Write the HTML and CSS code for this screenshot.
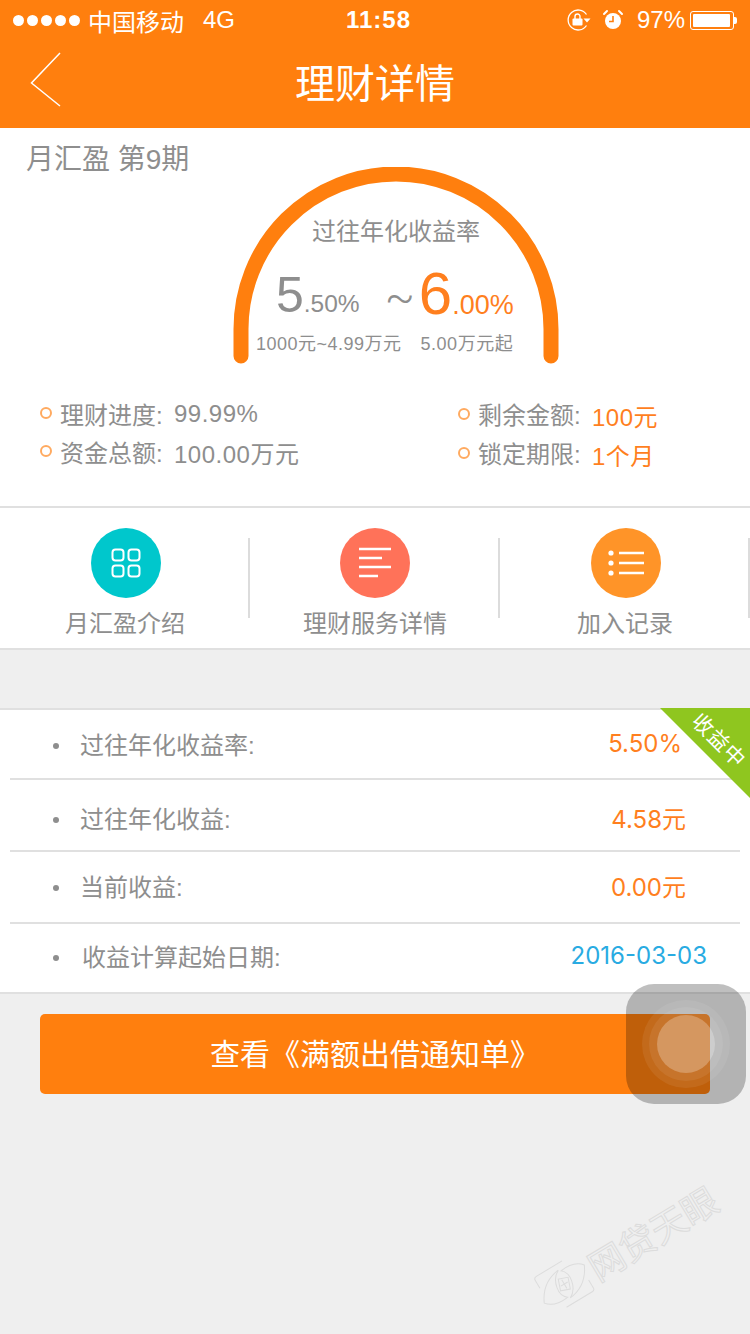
FILE: index.html
```html
<!DOCTYPE html>
<html lang="zh-CN">
<head>
  <meta charset="UTF-8">
  <title>理财详情</title>
  <link rel="stylesheet" href="styles.css">
</head>
<body>
  <div class="page">
    <header class="top">
      <div class="status-bar">
        <div class="status-left">
          <span class="signal"><i></i><i></i><i></i><i></i><i></i></span>
          <span class="carrier">中国移动</span>
          <span class="network">4G</span>
        </div>
        <div class="status-time">11:58</div>
        <div class="status-right">
          <svg class="icon-lock" width="24" height="22" viewBox="0 0 24 22">
            <path d="M19.500 16.500 A10 10 0 1 1 19.500 5.500" fill="none" stroke="#fff" stroke-width="1.300"/>
            <path d="M16.500 9.500 H23.500 L20 13.500 Z" fill="#fff"/>
            <rect x="5.500" y="9.500" width="10" height="7" rx="1" fill="#fff"/>
            <path d="M8 10 V7.500 A2.500 2.500 0 0 1 13 7.500 V10" fill="none" stroke="#fff" stroke-width="1.400"/>
          </svg>
          <svg class="icon-alarm" width="22" height="22" viewBox="0 0 22 22">
            <circle cx="11" cy="12" r="8" fill="#fff"/>
            <path d="M11 7 V12.500 H7" fill="none" stroke="#ff7f0e" stroke-width="1.600"/>
            <path d="M2 5 L5 2 M17 2 L20 5" stroke="#fff" stroke-width="2" stroke-linecap="round"/>
          </svg>
          <span class="battery-text">97%</span>
          <span class="battery"><span class="battery-level"></span></span>
          <span class="battery-tip"></span>
        </div>
      </div>
      <div class="nav-bar">
        <svg class="nav-back" width="32" height="56" viewBox="0 0 32 56">
          <path d="M30 1 L1.500 31 L30 54" fill="none" stroke="#fff" stroke-width="1.500"/>
        </svg>
        <h1 class="nav-title">理财详情</h1>
      </div>
    </header>

    <section class="summary">
      <div class="summary-title">月汇盈 第9期</div>
      <div class="gauge">
        <svg class="gauge-arc" width="326" height="198" viewBox="0 0 326 198">
          <path d="M8 189 V162 A155 155 0 0 1 318 162 V189" fill="none" stroke="#ff7f0e" stroke-width="15" stroke-linecap="round"/>
        </svg>
        <div class="gauge-label">过往年化收益率</div>
        <div class="gauge-rates">
          <span class="rate-low"><b>5</b>.50%</span>
          <span class="rate-sep">~</span>
          <span class="rate-high"><b>6</b>.00%</span>
        </div>
        <div class="gauge-notes">
          <span>1000元~4.99万元</span>
          <span>5.00万元起</span>
        </div>
      </div>
      <div class="info">
        <div class="info-col">
          <div class="info-row"><i class="ring"></i><span class="info-label">理财进度:</span><span class="info-value">99.99%</span></div>
          <div class="info-row"><i class="ring"></i><span class="info-label">资金总额:</span><span class="info-value">100.00万元</span></div>
        </div>
        <div class="info-col">
          <div class="info-row"><i class="ring"></i><span class="info-label">剩余金额:</span><span class="info-value orange">100元</span></div>
          <div class="info-row"><i class="ring"></i><span class="info-label">锁定期限:</span><span class="info-value orange">1个月</span></div>
        </div>
      </div>
    </section>

    <nav class="menu">
      <a class="menu-item">
        <span class="menu-icon teal">
          <svg width="30" height="30" viewBox="0 0 30 30" fill="none" stroke="#fff" stroke-width="2">
            <rect x="1.500" y="1.500" width="11" height="11" rx="3"/>
            <rect x="17.500" y="1.500" width="11" height="11" rx="3"/>
            <rect x="1.500" y="17.500" width="11" height="11" rx="3"/>
            <rect x="17.500" y="17.500" width="11" height="11" rx="3"/>
          </svg>
        </span>
        <span class="menu-label">月汇盈介绍</span>
      </a>
      <span class="menu-sep"></span>
      <a class="menu-item">
        <span class="menu-icon coral">
          <svg width="34" height="32" viewBox="0 0 34 32" stroke="#fff" stroke-width="2.400">
            <path d="M1 2 H33 M1 11 H24 M1 20 H33 M1 29 H20"/>
          </svg>
        </span>
        <span class="menu-label">理财服务详情</span>
      </a>
      <span class="menu-sep"></span>
      <a class="menu-item">
        <span class="menu-icon amber">
          <svg width="36" height="28" viewBox="0 0 36 28" stroke="#fff" stroke-width="2.400">
            <path d="M11 4 H36 M11 14 H36 M11 24 H36"/>
            <circle cx="3" cy="4" r="2.600" fill="#fff" stroke="none"/>
            <circle cx="3" cy="14" r="2.600" fill="#fff" stroke="none"/>
            <circle cx="3" cy="24" r="2.600" fill="#fff" stroke="none"/>
          </svg>
        </span>
        <span class="menu-label">加入记录</span>
      </a>
      <span class="menu-sep"></span>
    </nav>

    <section class="list">
      <div class="ribbon"><span>收益中</span></div>
      <div class="list-row row-a"><i class="dot"></i><span class="list-label">过往年化收益率:</span><span class="list-value v-a">5.50%</span></div>
      <div class="list-row row-b"><i class="dot"></i><span class="list-label">过往年化收益:</span><span class="list-value v-b">4.58元</span></div>
      <div class="list-row row-c"><i class="dot"></i><span class="list-label">当前收益:</span><span class="list-value v-b">0.00元</span></div>
      <div class="list-row row-d"><i class="dot"></i><span class="list-label">收益计算起始日期:</span><span class="list-value v-d">2016-03-03</span></div>
    </section>

    <a class="notice-btn">查看《满额出借通知单》</a>

    <div class="watermark">
      <svg class="watermark-logo" width="56" height="50" viewBox="0 0 56 50" fill="none" stroke="#dcdcdc" stroke-width="1">
        <path d="M5 16 V7 Q5 4 8 4 H38 M51 34 V43 Q51 46 48 46 H18"/>
        <path d="M1 31 Q10 12 30 10 Q22 14 20 24 Q18 33 24 38 Q8 40 1 31 Z"/>
        <path d="M55 19 Q46 38 26 40 Q34 36 36 26 Q38 17 32 12 Q48 10 55 19 Z"/>
        <rect x="23" y="19" width="10" height="12" transform="rotate(20 28 25)"/>
        <path d="M24 25 H32 M28 20 V30"/>
      </svg>
      <span class="watermark-text">网贷天眼</span>
    </div>

    <div class="assist">
      <span class="assist-ring r1"></span>
      <span class="assist-ring r2"></span>
      <span class="assist-ring r3"></span>
    </div>
  </div>
</body>
</html>
```
FILE: styles.css
```css
* {
  box-sizing: border-box;
}
body {
  margin: 0;
  background: #efefef;
  font-family: "Liberation Sans", "Noto Sans CJK SC", sans-serif;
  color: #8e8e8e;
}
.page {
  position: relative;
  width: 750px;
  height: 1334px;
  overflow: hidden;
}
.orange {
  color: #ff7f1e;
}

/* header */
.top {
  background: #ff7f0e;
  color: #fff;
}
.status-bar {
  height: 40px;
  display: flex;
  align-items: center;
  justify-content: space-between;
  padding: 0 13px 0 13px;
  font-size: 24px;
  position: relative;
}
.status-left {
  display: flex;
  align-items: center;
}
.signal {
  display: flex;
  gap: 3px;
  margin-right: 8px;
}
.signal i {
  width: 11px;
  height: 11px;
  border-radius: 50%;
  background: #fff;
}
.network {
  margin-left: 19px;
}
.status-time {
  position: absolute;
  left: 346px;
  font-weight: bold;
  letter-spacing: 1px;
}
.status-right {
  display: flex;
  align-items: center;
}
.icon-lock {
  margin-right: 11px;
}
.icon-alarm {
  margin-right: 13px;
}
.battery-text {
  margin-right: 5px;
}
.battery {
  width: 44px;
  height: 19px;
  border: 1px solid #fff;
  border-radius: 3px;
  padding: 2px;
  display: flex;
}
.battery-level {
  width: 97%;
  background: #fff;
  border-radius: 1px;
}
.battery-tip {
  width: 3px;
  height: 7px;
  background: #fff;
  border-radius: 0 2px 2px 0;
}
.nav-bar {
  height: 88px;
  display: flex;
  align-items: center;
  justify-content: center;
  position: relative;
}
.nav-back {
  position: absolute;
  left: 30px;
  top: 12px;
}
.nav-title {
  margin: 0;
  font-size: 40px;
  font-weight: normal;
  line-height: 90px;
}

/* summary */
.summary {
  background: #fff;
  height: 380px;
  padding-top: 21px;
  border-bottom: 2px solid #e0e0e0;
}
.summary-title {
  height: 22px;
  line-height: 22px;
  padding-left: 26px;
  font-size: 28px;
}
.gauge {
  position: relative;
  width: 326px;
  height: 194px;
  margin-left: 233px;
  padding-top: 47px;
}
.gauge-arc {
  position: absolute;
  left: 0;
  top: -4px;
}
.gauge-label {
  line-height: 28px;
  font-size: 24px;
  text-align: center;
}
.gauge-rates {
  display: flex;
  align-items: baseline;
  height: 62px;
  line-height: 62px;
  padding-left: 43px;
  margin-top: 15px;
  font-size: 24.500px;
}
.gauge-rates b {
  font-weight: normal;
  font-size: 50px;
}
.rate-sep {
  margin-left: 25px;
  font-family: Roboto, sans-serif;
  font-weight: 300;
  font-size: 44px;
  line-height: 40px;
}
.rate-high {
  margin-left: 4px;
  font-size: 27px;
  color: #ff7f1e;
  transform: translateY(2px);
}
.rate-high b {
  font-size: 60px;
}
.gauge-notes {
  display: flex;
  gap: 19px;
  padding-left: 23px;
  margin-top: 9px;
  font-size: 18px;
  line-height: 24px;
  letter-spacing: 0.500px;
}
.info {
  display: flex;
  padding: 29px 0 0 40px;
}
.info-col {
  flex: none;
  width: 292px;
}
.info-col:first-child {
  width: 418px;
}
.info-col:last-child .info-row {
  height: 39px;
}
.info-col:last-child .info-value {
  padding-top: 3px;
}
.info-row {
  display: flex;
  align-items: center;
  height: 38px;
  font-size: 24px;
}
.ring {
  width: 12px;
  height: 12px;
  border: 2px solid #ffaa60;
  border-radius: 50%;
  margin-right: 8px;
}
.info-label {
  width: 114px;
}
.info-value {
  padding-top: 2px;
  letter-spacing: 0.500px;
}

/* menu */
.menu {
  background: #fff;
  height: 142px;
  display: flex;
  border-bottom: 2px solid #e0e0e0;
}
.menu-item {
  flex: 1;
  display: flex;
  flex-direction: column;
  align-items: center;
  padding: 20px 0 0 2px;
}
.menu-icon {
  width: 70px;
  height: 70px;
  border-radius: 50%;
  display: flex;
  align-items: center;
  justify-content: center;
}
.teal {
  background: #00c7cc;
  margin-left: 2px;
}
.coral {
  background: #ff7259;
}
.amber {
  background: #ff9428;
  margin-left: 2px;
}
.menu-label {
  margin-top: 9px;
  font-size: 24px;
  line-height: 34px;
}
.menu-sep {
  width: 2px;
  height: 80px;
  margin-top: 30px;
  background: #dcdcdc;
}

/* list */
.list {
  position: relative;
  margin-top: 58px;
  background: #fff;
  padding: 0 10px;
  border-top: 2px solid #e0e0e0;
  border-bottom: 2px solid #e0e0e0;
  font-size: 24px;
}
.list-row {
  display: flex;
  align-items: center;
  justify-content: space-between;
  padding-left: 43px;
  border-bottom: 2px solid #e0e0e0;
}
.row-a {
  height: 70px;
  padding-bottom: 2px;
}
.row-b {
  height: 72px;
  padding-top: 4px;
}
.row-c {
  height: 72px;
  padding-bottom: 4px;
}
.row-d {
  height: 68px;
  border-bottom: none;
  padding-bottom: 6px;
}
.dot {
  width: 6px;
  height: 6px;
  border-radius: 50%;
  background: #8e8e8e;
  margin-right: 21px;
  transform: translateY(3px);
}
.row-d .dot {
  margin-right: 23px;
}
.list-label {
  flex: 1;
}
.list-value {
  color: #ff7f1e;
  font-family: Inter, "Noto Sans CJK SC", sans-serif;
}
.v-a {
  margin-right: 58px;
}
.v-b {
  margin-right: 54px;
}
.v-d {
  margin-right: 33px;
  color: #29abe2;
}
.ribbon {
  position: absolute;
  top: -2px;
  right: 0;
  width: 90px;
  height: 90px;
  background: #8fc61f;
  clip-path: polygon(0 0, 100% 0, 100% 100%);
  color: #fff;
  font-size: 21px;
}
.ribbon span {
  position: absolute;
  left: 26px;
  top: 22px;
  width: 66px;
  text-align: center;
  line-height: 21px;
  letter-spacing: 1px;
  transform: rotate(45deg);
  white-space: nowrap;
}

/* button */
.notice-btn {
  display: block;
  height: 80px;
  margin: 20px 40px 0;
  border-radius: 5px;
  background: #ff7f0e;
  color: #fff;
  font-size: 30px;
  line-height: 82px;
  text-align: center;
}

/* watermark */
.watermark {
  position: absolute;
  left: 526px;
  top: 1221px;
  width: 200px;
  display: flex;
  align-items: center;
  transform: rotate(-31deg);
}
.watermark-logo {
  flex: none;
}
.watermark-text {
  margin-left: 2px;
  font-size: 36px;
  white-space: nowrap;
  color: transparent;
  -webkit-text-stroke: 1px #dcdcdc;
}

/* floating touch button */
.assist {
  position: absolute;
  left: 626px;
  top: 984px;
  width: 120px;
  height: 120px;
  border-radius: 28px;
  background: rgba(0, 0, 0, 0.25);
}
.assist-ring {
  position: absolute;
  border-radius: 50%;
  background: rgba(255, 255, 255, 0.07);
}
.r1 {
  left: 16px;
  top: 16px;
  width: 88px;
  height: 88px;
}
.r2 {
  left: 23px;
  top: 23px;
  width: 74px;
  height: 74px;
  background: rgba(255, 255, 255, 0.07);
}
.r3 {
  left: 31px;
  top: 31px;
  width: 58px;
  height: 58px;
  background: rgba(255, 255, 255, 0.25);
}
```
